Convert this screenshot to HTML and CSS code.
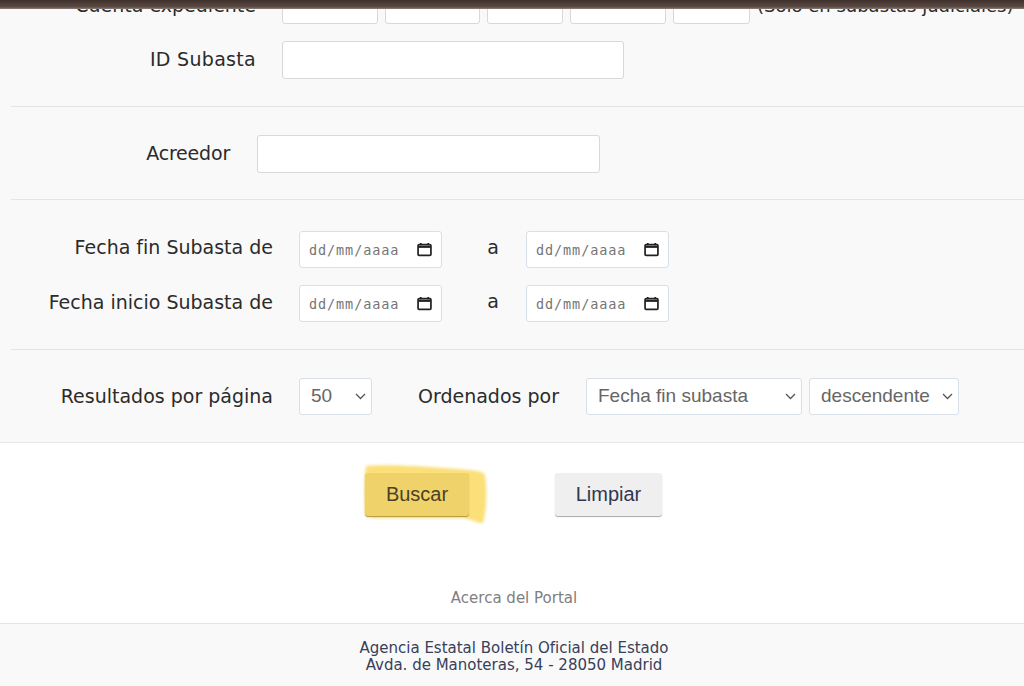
FILE: index.html
```html
<!DOCTYPE html>
<html lang="es">
<head>
<meta charset="utf-8">
<title>Búsqueda de subastas</title>
<link rel="stylesheet" href="styles.css">
</head>
<body>
<div class="topbar"></div>
<main class="panel">
  <section class="group group-id">
    <div class="row row-exp">
      <label class="label label-id">Cuenta expediente</label>
      <div class="fields-exp">
        <input class="input w96" type="text">
        <input class="input w95" type="text">
        <input class="input w76" type="text">
        <input class="input w96" type="text">
        <input class="input w77" type="text">
      </div>
      <span class="hint">(Sólo en subastas judiciales)</span>
    </div>
    <div class="row row-sub">
      <label class="label label-id label-up label-sub">ID Subasta</label>
      <input class="input w342" type="text">
    </div>
  </section>
  <section class="group group-acr">
    <div class="row">
      <label class="label label-acr label-up">Acreedor</label>
      <input class="input w343" type="text">
    </div>
  </section>
  <section class="group group-date">
    <div class="row">
      <label class="label label-wide label-up2">Fecha fin Subasta de</label>
      <div class="date"><span>dd/mm/aaaa</span><svg viewBox="0 0 14 14" class="cal"><path d="M3.500 1v2M10.500 1v2"/><rect x="1" y="2.500" width="12" height="10" rx="1"/><path class="thick" d="M1 4.500h12"/></svg></div>
      <span class="sep">a</span>
      <div class="date"><span>dd/mm/aaaa</span><svg viewBox="0 0 14 14" class="cal"><path d="M3.500 1v2M10.500 1v2"/><rect x="1" y="2.500" width="12" height="10" rx="1"/><path class="thick" d="M1 4.500h12"/></svg></div>
    </div>
    <div class="row row-date2">
      <label class="label label-wide label-up2b">Fecha inicio Subasta de</label>
      <div class="date"><span>dd/mm/aaaa</span><svg viewBox="0 0 14 14" class="cal"><path d="M3.500 1v2M10.500 1v2"/><rect x="1" y="2.500" width="12" height="10" rx="1"/><path class="thick" d="M1 4.500h12"/></svg></div>
      <span class="sep">a</span>
      <div class="date"><span>dd/mm/aaaa</span><svg viewBox="0 0 14 14" class="cal"><path d="M3.500 1v2M10.500 1v2"/><rect x="1" y="2.500" width="12" height="10" rx="1"/><path class="thick" d="M1 4.500h12"/></svg></div>
    </div>
  </section>
  <section class="group group-res">
    <div class="row">
      <label class="label label-wide label-up">Resultados por página</label>
      <select class="select s73"><option>50</option></select>
      <label class="label label-order label-up">Ordenados por</label>
      <select class="select s216"><option>Fecha fin subasta</option></select>
      <select class="select s150"><option>descendente</option></select>
    </div>
  </section>
</main>
<div class="actions">
  <div class="marker">
    <svg class="marker-ink" viewBox="0 0 126 64"><path d="M3 3 C30 1 70 4 106 7 C114 8 120 8 122 12 C124 25 124 45 120 60 C116 61 108 56 100 55 L16 55 C8 55 3 54 2 50 C1 35 1 15 3 3 Z"/></svg>
    <button class="btn btn-search" type="button">Buscar</button>
  </div>
  <button class="btn btn-clear" type="button">Limpiar</button>
</div>
<a class="about">Acerca del Portal</a>
<footer class="footer">
  <div>Agencia Estatal Boletín Oficial del Estado</div>
  <div>Avda. de Manoteras, 54 - 28050 Madrid</div>
</footer>
</body>
</html>
```
FILE: styles.css
```css
* { box-sizing: border-box; }
html, body { height: 686px; overflow: hidden; }
body {
  margin: 0;
  background: #fff;
  font-family: "DejaVu Sans", sans-serif;
  color: #2b2b2b;
}
.topbar {
  position: absolute;
  top: 0; left: 0; right: 0;
  height: 9px;
  z-index: 2;
  background: linear-gradient(#3f302b, #5b4a44 75%, #8a7f7b);
}
.panel {
  height: 443px;
  background: #f9f9f9;
  border-bottom: 1px solid #e4e4e4;
  overflow: hidden;
}
.group {
  margin: 0 0 0 11px;
  border-bottom: 1px solid #e5e5e5;
}
.group-res { border-bottom: 0; padding-top: 28px; }
.group-id { margin-top: -14px; height: 121px; }
.group-acr { height: 93px; padding-top: 28px; }
.group-date { height: 150px; padding-top: 31px; }
.row { display: flex; align-items: center; }
.row-sub { margin-top: 17px; }
.row-date2 { margin-top: 17px; }
.label {
  font-size: 19px;
  text-align: right;
  white-space: nowrap;
  flex: none;
}
.label-up { padding-bottom: 2px; }
.label-up2 { padding-bottom: 6px; }
.label-up2b { padding-bottom: 4px; }
.label-sub { letter-spacing: 0.300px; }
.label-acr { letter-spacing: -0.200px; }
.label-id { width: 245px; margin-right: 26px; }
.label-acr { width: 219px; margin-right: 27px; }
.label-wide { width: 262px; margin-right: 26px; }
.label-order { margin: 0 27px 0 46px; }
.fields-exp { display: flex; gap: 7px; }
.input {
  height: 38px;
  background: #fff;
  border: 1px solid #d8d8d8;
  border-radius: 3px;
  padding: 0;
  flex: none;
}
.w95 { width: 95px; }
.w76 { width: 76px; }
.w96 { width: 96px; }
.w77 { width: 77px; }
.w342 { width: 342px; }
.w343 { width: 343px; }
.hint { font-size: 18px; margin-left: 7px; white-space: nowrap; }
.date {
  width: 143px;
  height: 37px;
  background: #fff;
  border: 1px solid #d7dfe8;
  border-radius: 3px;
  display: flex;
  align-items: center;
  justify-content: space-between;
  padding: 0 9px;
  font-family: "DejaVu Sans Mono", monospace;
  font-size: 13.500px;
  letter-spacing: 0.900px;
  color: #757575;
  flex: none;
}
.cal { width: 15px; height: 15px; fill: none; stroke: #222; stroke-width: 1.600; }
.cal .thick { stroke-width: 2; }
.sep { width: 84px; padding: 0 0 5px 18px; text-align: center; font-size: 19px; flex: none; }
.select {
  height: 37px;
  appearance: none;
  background: #fff url("data:image/svg+xml,%3Csvg xmlns='http://www.w3.org/2000/svg' width='11' height='7'%3E%3Cpath d='M1 1l4.500 4.500L10 1' fill='none' stroke='%23555' stroke-width='1.300'/%3E%3C/svg%3E") no-repeat right 5px center;
  border: 1px solid #d7dfe8;
  border-radius: 3px;
  font-family: "Liberation Sans", sans-serif;
  font-size: 19px;
  color: #666;
  padding: 0 6px 2px 11px;
  flex: none;
}
.s73 { width: 73px; }
.s216 { width: 216px; }
.s150 { width: 150px; margin-left: 7px; }
.actions {
  display: flex;
  height: 101px;
  padding: 30px 0 0 365px;
}
.marker { position: relative; flex: none; }
.marker-ink {
  position: absolute;
  left: -2px;
  top: -10px;
  width: 126px;
  height: 64px;
  fill: #fbdf78;
  filter: blur(1.500px);
}
.btn {
  position: relative;
  height: 43px;
  border: 0;
  border-radius: 3px;
  font-family: "Liberation Sans", sans-serif;
  font-size: 20px;
  color: #2f3750;
  background: #efefef;
  padding: 0;
  box-shadow: 0 1px 1px #a9a9a9;
  display: block;
}
.btn-search {
  width: 104px;
  background: #f0d26b;
  box-shadow: 0 1px 1px #b2963f;
  color: #4a4126;
}
.btn-clear { width: 107px; margin-left: 86px; }
.about {
  display: block;
  margin-top: 45px;
  padding-left: 4px;
  text-align: center;
  font-size: 15px;
  line-height: 18px;
  color: #808080;
}
.footer {
  margin-top: 16px;
  height: 63px;
  padding: 16px 0 0 4px;
  background: #f9f9f9;
  border-top: 1px solid #e4e4e4;
  text-align: center;
  font-size: 15px;
  line-height: 17px;
  color: #38405a;
}
```
